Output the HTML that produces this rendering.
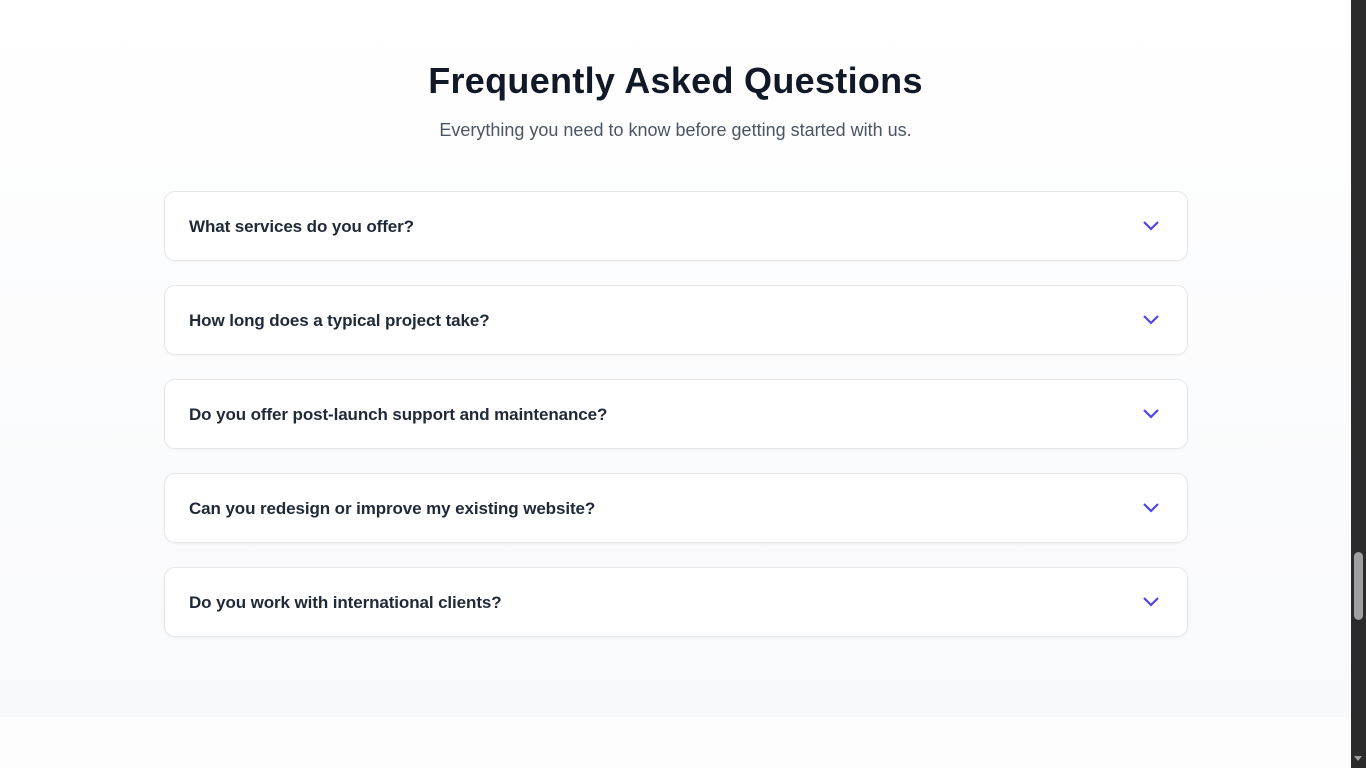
<!DOCTYPE html>
<html><head><style>
html,body{margin:0;height:768px;overflow:hidden;background:#fdfdfe;font-family:"Liberation Sans",sans-serif}
.sec{position:absolute;left:0;top:0;width:1351px;height:717px;background:linear-gradient(#fff,#f8f9fb)}
h2{position:absolute;top:60px;left:0;width:1351px;text-align:center;margin:0;font-size:36px;font-weight:bold;color:#111827;letter-spacing:0.3px}
.sub{position:absolute;top:120px;left:0;width:1351px;text-align:center;font-size:18px;color:#4b5563}
.card{position:absolute;left:164px;width:1022px;height:68px;background:#fff;border:1px solid #e5e7eb;border-radius:11px;box-shadow:0 1px 2px rgba(0,0,0,.04);box-sizing:content-box}
.card span{position:absolute;left:24px;top:25px;font-size:17px;font-weight:bold;color:#1f2937;letter-spacing:-0.1px}
.card svg{position:absolute;left:977px;top:27px}
.sb{position:absolute;left:1351px;top:0;width:15px;height:768px;background:#2b2b2b}
.th{position:absolute;left:1354px;top:552px;width:9px;height:68px;background:#a0a0a0;border-radius:5px}
.ar{position:absolute;left:1354px;top:756px;width:0;height:0;border-left:4.5px solid transparent;border-right:4.5px solid transparent;border-top:5px solid #a0a0a0}
</style></head><body>
<div class="sec">
<h2>Frequently Asked Questions</h2>
<div class="sub">Everything you need to know before getting started with us.</div>
<div class="card" style="top:191px"><span>What services do you offer?</span><svg width="18" height="12" viewBox="0 0 18 12"><path d="M2 3l7 7 7-7" fill="none" stroke="#4f46e5" stroke-width="2.2"/></svg></div>
<div class="card" style="top:285px"><span>How long does a typical project take?</span><svg width="18" height="12" viewBox="0 0 18 12"><path d="M2 3l7 7 7-7" fill="none" stroke="#4f46e5" stroke-width="2.2"/></svg></div>
<div class="card" style="top:379px"><span>Do you offer post-launch support and maintenance?</span><svg width="18" height="12" viewBox="0 0 18 12"><path d="M2 3l7 7 7-7" fill="none" stroke="#4f46e5" stroke-width="2.2"/></svg></div>
<div class="card" style="top:473px"><span>Can you redesign or improve my existing website?</span><svg width="18" height="12" viewBox="0 0 18 12"><path d="M2 3l7 7 7-7" fill="none" stroke="#4f46e5" stroke-width="2.2"/></svg></div>
<div class="card" style="top:567px"><span>Do you work with international clients?</span><svg width="18" height="12" viewBox="0 0 18 12"><path d="M2 3l7 7 7-7" fill="none" stroke="#4f46e5" stroke-width="2.2"/></svg></div>
</div>
<div class="sb"></div><div class="th"></div><div class="ar"></div>
</body></html>
